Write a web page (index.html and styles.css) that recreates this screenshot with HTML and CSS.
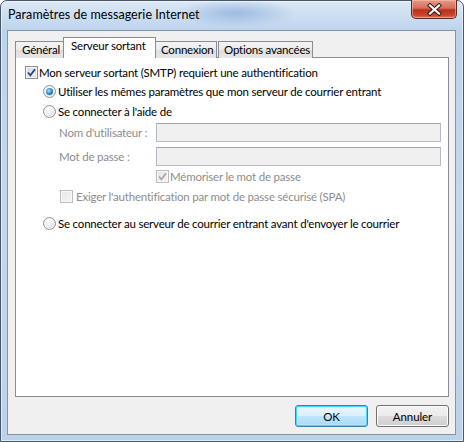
FILE: index.html
```html
<!DOCTYPE html>
<html lang="fr">
<head>
<meta charset="utf-8">
<title>Paramètres de messagerie Internet</title>
<link rel="stylesheet" href="styles.css">
</head>
<body>
<div class="window">
  <div class="titlebar">
    <span class="title">Paramètres de messagerie Internet</span>
    <div class="close">
      <svg width="15" height="13" viewBox="0 0 15 13"><path d="M3 2.5 L12 10.5 M12 2.5 L3 10.5" stroke="#3a1a18" stroke-width="4.2" stroke-linecap="square"/><path d="M3 2.5 L12 10.5 M12 2.5 L3 10.5" stroke="#ffffff" stroke-width="2.2" stroke-linecap="square"/></svg>
    </div>
  </div>
  <div class="client">
    <div class="tabs">
      <div class="tab t1">Général</div>
      <div class="tab t2 active">Serveur sortant</div>
      <div class="tab t3">Connexion</div>
      <div class="tab t4">Options avancées</div>
    </div>
    <div class="panel">
      <div class="row r1">
        <span class="cb"><svg class="mark" width="11" height="11" viewBox="0 0 11 11"><path d="M2 5.5 L4.4 8.3 L9 2.2" fill="none" stroke="#21428a" stroke-width="1.8"/></svg></span>
        <span class="lbl">Mon serveur sortant (SMTP) requiert une authentification</span>
      </div>
      <div class="row r2 ind1">
        <span class="rb on"></span>
        <span class="lbl">Utiliser les mêmes paramètres que mon serveur de courrier entrant</span>
      </div>
      <div class="row r3 ind1">
        <span class="rb"></span>
        <span class="lbl">Se connecter à l'aide de</span>
      </div>
      <div class="row field f1">
        <span class="flbl dis">Nom d'utilisateur :</span>
        <span class="input"></span>
      </div>
      <div class="row field f2">
        <span class="flbl dis">Mot de passe :</span>
        <span class="input"></span>
      </div>
      <div class="row r6 ind-mem">
        <span class="cb dis"><svg class="mark" width="11" height="11" viewBox="0 0 11 11"><path d="M2 5.5 L4.4 8.3 L9 2.2" fill="none" stroke="#a8a8a8" stroke-width="1.8"/></svg></span>
        <span class="lbl dis">Mémoriser le mot de passe</span>
      </div>
      <div class="row r7 ind-spa">
        <span class="cb dis"></span>
        <span class="lbl dis lbl-spa">Exiger l'authentification par mot de passe sécurisé (SPA)</span>
      </div>
      <div class="row r8 ind1">
        <span class="rb"></span>
        <span class="lbl">Se connecter au serveur de courrier entrant avant d'envoyer le courrier</span>
      </div>
    </div>
    <div class="buttons">
      <button class="btn default">OK</button>
      <button class="btn">Annuler</button>
    </div>
  </div>
</div>
</body>
</html>
```
FILE: styles.css
```css
* { box-sizing: border-box; }
html, body { margin: 0; padding: 0; background: #ffffff; }
body { width: 464px; height: 442px; overflow: hidden; font-family: Lato, "Noto Sans", sans-serif; font-size: 11.5px; letter-spacing: -0.2px; color: #000; }

.window {
  width: 464px; height: 442px;
  border: 1px solid #48566a;
  border-radius: 7px 7px 0 0;
  background:
    radial-gradient(ellipse 60px 14px at 235px 12px, rgba(140,175,220,0.75), rgba(140,175,220,0) 100%),
    linear-gradient(180deg, #dce8f6 0px, #cddff2 14px, #bcd3ec 30px, #c3d8ee 200px, #bcd2ea 442px);
  box-shadow: inset 0 0 0 1px rgba(255,255,255,0.55);
  display: flex; flex-direction: column;
}

.titlebar { height: 29px; display: flex; justify-content: space-between; align-items: flex-start; }
.title { font-size: 12.5px; letter-spacing: 0.05px; margin: 6px 0 0 7px; color: #000; }
.close {
  width: 46px; height: 19px; margin: -1px 6px 0 0;
  border: 1px solid #5a2b26; border-top: none;
  border-radius: 0 0 5px 5px;
  background: linear-gradient(180deg, #e59a88 0%, #d4705a 45%, #bb3018 55%, #c8472c 85%, #dd7a5e 100%);
  box-shadow: inset 0 0 0 1px rgba(255,200,185,0.5);
  display: flex; align-items: center; justify-content: center;
}
.close svg { display: block; }

.client {
  margin: 0 7px 0 6px;
  height: 405px;
  border: 1px solid #8493a6;
  background: #f0f0f0;
  padding: 6px 6px 0 7px;
  display: flex; flex-direction: column;
}

.tabs { display: flex; height: 20px; align-items: flex-end; position: relative; z-index: 1; }
.tab {
  height: 17px; margin-bottom: -1px;
  border: 1px solid #898c95; border-bottom: none;
  background: linear-gradient(180deg, #f3f3f3 0%, #ebebeb 50%, #dedede 51%, #e6e6e6 100%);
  padding: 0 0 0 6px; line-height: 16px; white-space: nowrap;
}
.tab + .tab { margin-left: -1px; }
.t1 { width: 49px; }
.t2 { width: 93px; }
.t3 { width: 62px; padding-left: 5px; }
.t4 { width: 95px; margin-left: 1px !important; padding-left: 5px; }
.tab.active {
  height: 21px; background: #ffffff; line-height: 16px; padding-left: 7px;
  margin-bottom: -1px; position: relative;
}

.panel {
  width: 434px; height: 340px;
  border: 1px solid #898c95;
  background: #ffffff;
  padding: 5px 0 0 9px;
  display: flex; flex-direction: column;
}

.row { display: flex; align-items: center; height: 19px; white-space: nowrap; }
.r3 { height: 20px; }
.ind1 { margin-left: 18px; }
.lbl { margin-left: 1px; }
.field { margin-left: 34px; margin-top: 2px; }
.f2 { margin-top: 5px; }
.flbl { width: 97px; }
.input {
  width: 285px; height: 19px;
  border: 1px solid #b5bcc7; border-top-color: #a0a7b2;
  background: #f0f0f0;
}
.r6 { height: 20px; }
.r7 { height: 20px; }
.ind-mem { margin-left: 131px; }
.ind-spa { margin-left: 35px; }
.lbl-spa { margin-left: 3px; }
.r8 { height: 20px; margin-top: 7px; }
.dis { color: #8d8d8d; }

.cb {
  width: 13px; height: 13px; flex: none;
  border: 1px solid #8e8f8f;
  background: linear-gradient(135deg, #cdd1d6 0%, #eef0f2 60%, #f9f9f9 100%);
  box-shadow: inset 0 0 0 1px #f6f6f6, inset 0 0 0 2px #dfe1e4;
  display: flex; align-items: center; justify-content: center;
}
.cb.dis {
  border-color: #bcbcbc;
  background: linear-gradient(135deg, #e6e6e6 0%, #f4f4f4 100%);
  box-shadow: inset 0 0 0 1px #f8f8f8;
}
.mark { display: block; }
.rb {
  width: 13px; height: 13px; flex: none; border-radius: 50%;
  border: 1px solid #8d939a;
  background: radial-gradient(circle at 40% 35%, #ffffff 0%, #eceef0 40%, #c9ced4 100%);
  box-shadow: inset 0 0 0 1px #f4f5f6;
  display: flex; align-items: center; justify-content: center;
}
.rb.on::after {
  content: ""; width: 7px; height: 7px; border-radius: 50%;
  background: radial-gradient(circle at 40% 40%, #b8e6fb 0%, #49a7e0 35%, #1f5e9e 75%, #163e72 100%);
}
.rb + .lbl { margin-left: 2px; }

.buttons { display: flex; justify-content: flex-end; gap: 8px; margin-top: 8px; }
.btn {
  width: 73px; height: 22px; padding: 0;
  font-family: inherit; font-size: 11.5px; letter-spacing: -0.1px; color: #000;
  border: 1px solid #707070; border-radius: 3px;
  background: linear-gradient(180deg, #f2f2f2 0%, #ebebeb 50%, #dddddd 51%, #cfcfcf 100%);
  box-shadow: inset 0 0 0 1px #fcfcfc;
}
.btn.default {
  border-color: #3c7fb1;
  box-shadow: inset 0 0 0 1px #48d3fb, inset 0 0 0 2px rgba(200,240,255,0.5);
  background: linear-gradient(180deg, #eaf6fd 0%, #d9f0fc 50%, #bee6fd 51%, #a7d9f5 100%);
}
```
